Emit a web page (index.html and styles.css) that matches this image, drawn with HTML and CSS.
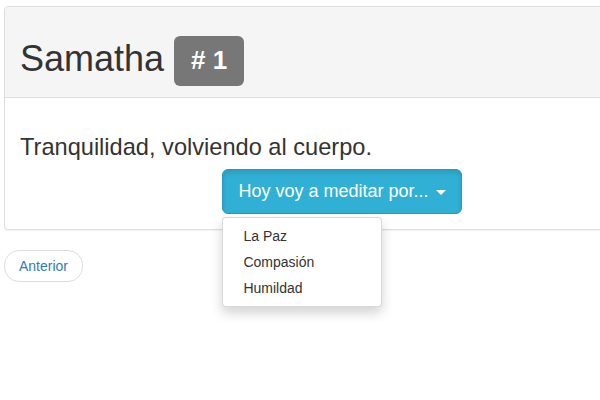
FILE: index.html
```html
<!DOCTYPE html>
<html lang="es">
<head>
<meta charset="utf-8">
<title>Samatha</title>
<link rel="stylesheet" href="styles.css">
</head>
<body>
<div class="page">
  <div class="card">
    <div class="card-heading">
      <h1 class="title">Samatha <span class="badge"># 1</span></h1>
    </div>
    <div class="card-body">
      <p class="lead">Tranquilidad, volviendo al cuerpo.</p>
      <div class="actions">
        <div class="dropdown">
          <button class="btn-info" type="button">Hoy voy a meditar por... <span class="caret"></span></button>
          <ul class="dropdown-menu">
            <li><a href="#">La Paz</a></li>
            <li><a href="#">Compasión</a></li>
            <li><a href="#">Humildad</a></li>
          </ul>
        </div>
      </div>
    </div>
  </div>
  <ul class="pager">
    <li><a href="#">Anterior</a></li>
  </ul>
</div>
</body>
</html>
```

FILE: styles.css
```css
html, body {
  margin: 0;
  padding: 0;
  background: #fff;
}
body {
  font-family: "Liberation Sans", Arial, sans-serif;
  font-size: 14px;
  line-height: 1.42857;
  color: #333;
}
.page {
  box-sizing: border-box;
  width: 600px;
  height: 400px;
  overflow: hidden;
  padding: 6px 0 0 4px;
}
.card {
  width: 674px;
  border: 1px solid #ddd;
  border-radius: 4px;
  background: #fff;
  box-shadow: 0 1px 1px rgba(0, 0, 0, 0.05);
  margin-bottom: 20px;
}
.card-heading {
  background: #f5f5f5;
  border-bottom: 1px solid #ddd;
  border-radius: 3px 3px 0 0;
  padding: 29px 15px 11px;
}
.title {
  margin: 0;
  font-size: 36px;
  font-weight: 500;
  line-height: 1.1;
  color: #333;
}
.badge {
  display: inline-block;
  vertical-align: 2px;
  font-size: 26px;
  line-height: 26px;
  font-weight: bold;
  color: #fff;
  background: #777;
  padding: 11px 17px 13px;
  border-radius: 6px;
}
.card-body {
  padding: 15px;
}
.lead {
  margin: 17px 0 5px;
  font-size: 23.6px;
  line-height: 34px;
  color: #333;
}
.actions {
  display: flex;
  justify-content: center;
}
.dropdown {
  position: relative;
}
.btn-info {
  font-family: "Liberation Sans", Arial, sans-serif;
  font-size: 18px;
  line-height: 23px;
  padding: 10px 15px;
  color: #fff;
  background: #31b0d5;
  border: 1px solid #269abc;
  border-radius: 6px;
  box-shadow: inset 0 3px 5px rgba(0, 0, 0, 0.125);
  cursor: pointer;
  white-space: nowrap;
}
.caret {
  display: inline-block;
  width: 0;
  height: 0;
  margin-left: 2px;
  vertical-align: middle;
  border-top: 5px solid #fff;
  border-left: 5px solid transparent;
  border-right: 5px solid transparent;
}
.dropdown-menu {
  position: absolute;
  top: 100%;
  left: 0;
  margin: 3px 0 0;
  padding: 5px 0;
  min-width: 160px;
  list-style: none;
  background: #fff;
  border: 1px solid rgba(0, 0, 0, 0.15);
  border-radius: 4px;
  box-shadow: 0 6px 12px rgba(0, 0, 0, 0.175);
  box-sizing: border-box;
  z-index: 10;
}
.dropdown-menu a {
  display: block;
  padding: 3px 20px;
  line-height: 20px;
  color: #333;
  text-decoration: none;
  white-space: nowrap;
}
.pager {
  list-style: none;
  margin: 0;
  padding: 0;
}
.pager li {
  display: inline;
}
.pager a {
  display: inline-block;
  padding: 5px 14px;
  line-height: 20px;
  background: #fff;
  border: 1px solid #ddd;
  border-radius: 15px;
  color: #337ab7;
  text-decoration: none;
}
```
